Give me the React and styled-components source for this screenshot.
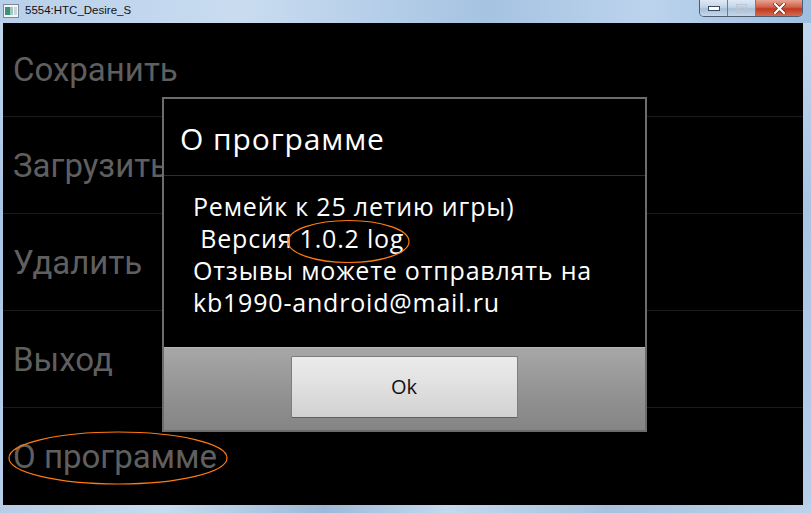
import React from 'react';
import styled, { createGlobalStyle } from 'styled-components';

const GlobalStyle = createGlobalStyle`
  html, body {
    margin: 0;
    padding: 0;
    background: #000;
  }
  #root {
    width: 811px;
    height: 513px;
  }
`;

const Window = styled.div`
  position: relative;
  width: 811px;
  height: 513px;
  display: flex;
  flex-direction: column;
  overflow: hidden;
  background: linear-gradient(180deg, #c3d8ee 0%, #a9c5e3 40%, #b7cfe9 100%);
`;

const TitleBar = styled.div`
  height: 23px;
  display: flex;
  align-items: flex-start;
  padding-left: 3px;
  background: linear-gradient(90deg, #b8d0ea 0%, #c9dcf0 30%, #a6c3e2 60%, #bcd3ec 80%, #9fbfe0 100%);
`;

const AppIcon = styled.svg`
  margin-top: 4px;
  width: 16px;
  height: 14px;
  flex: none;
`;

const Title = styled.div`
  margin-left: 6px;
  margin-top: 4px;
  font-family: "Liberation Sans", "DejaVu Sans", sans-serif;
  font-size: 11.5px;
  color: #111;
`;

const Controls = styled.div`
  margin-left: auto;
  margin-right: 8px;
  display: flex;
  height: 16px;
  border: 1px solid #4d5e74;
  border-top: none;
  border-radius: 0 0 5px 5px;
  overflow: hidden;
`;

const CtrlButton = styled.div`
  width: ${p => p.$w}px;
  height: 100%;
  display: flex;
  align-items: center;
  justify-content: center;
  background: ${p => p.$close
    ? 'linear-gradient(180deg, #e8a493 0%, #d0604a 45%, #c0391f 55%, #d46a4f 100%)'
    : 'linear-gradient(180deg, #dfe9f5 0%, #c3d4e8 45%, #a9bfd9 55%, #c5d7ea 100%)'};
  & + & {
    border-left: 1px solid #6d7e94;
  }
`;

const Body = styled.div`
  flex: 1;
  display: flex;
  min-height: 0;
`;

const SideFrame = styled.div`
  width: ${p => p.$w}px;
  flex: none;
`;

const Screen = styled.div`
  position: relative;
  flex: 1;
  background: #000;
  overflow: hidden;
`;

const BottomFrame = styled.div`
  height: 8px;
  flex: none;
  background: linear-gradient(90deg, #b6cde6 0%, #c8dcef 20%, #9db9d9 40%, #c4d8ee 55%, #a8c2de 75%, #bcd2ea 100%);
`;

const Menu = styled.div`
  display: flex;
  flex-direction: column;
`;

const MenuItem = styled.div`
  height: 96px;
  display: flex;
  align-items: center;
  padding-left: 10px;
  border-bottom: 1px solid #1b1b1b;
  font-family: Roboto, "Noto Sans", sans-serif;
  font-size: 33px;
  color: #5f5f5f;
  &:first-child {
    height: 93px;
  }
  &:last-child {
    border-bottom: none;
  }
`;

const Dialog = styled.div`
  position: absolute;
  left: 159px;
  top: 74px;
  width: 481px;
  height: 331px;
  border: 2px solid #6c6c6c;
  background: #000;
  display: flex;
  flex-direction: column;
  font-family: "Open Sans", "Noto Sans", sans-serif;
`;

const DialogTitle = styled.div`
  height: 77px;
  flex: none;
  box-sizing: border-box;
  padding: 22px 0 0 16px;
  font-size: 30px;
  letter-spacing: 0.9px;
  line-height: 36px;
  color: #fff;
  border-bottom: 1px solid #2e2e2e;
`;

const DialogText = styled.div`
  flex: 1;
  padding: 14px 0 0 29px;
  font-size: 25px;
  letter-spacing: 0.8px;
  line-height: 32px;
  color: #fff;
  white-space: pre;
`;

const ButtonBar = styled.div`
  height: 83px;
  flex: none;
  box-sizing: border-box;
  display: flex;
  align-items: center;
  justify-content: center;
  border-top: 1px solid #b4b4b4;
  background: linear-gradient(180deg, #a7a7a7 0%, #9a9a9a 35%, #8f8f8f 65%, #858585 100%);
`;

const OkButton = styled.button`
  width: 227px;
  height: 62px;
  margin-left: -1px;
  margin-top: -5px;
  border: 1px solid #7e7e7e;
  border-bottom-color: #5f5f5f;
  border-radius: 2px;
  background: linear-gradient(180deg, #ecebec 0%, #e2e1e2 45%, #d2d1d2 100%);
  font-family: "Open Sans", "Noto Sans", sans-serif;
  font-size: 20px;
  color: #111;
  padding: 0;
`;

const Annotations = styled.svg`
  position: absolute;
  left: 0;
  top: 0;
  width: 811px;
  height: 513px;
  pointer-events: none;
`;

const menuItems = ['Сохранить', 'Загрузить', 'Удалить', 'Выход', 'О программе'];

const App = () => {
  return (
    <>
      <GlobalStyle />
      <Window>
        <TitleBar>
          <AppIcon viewBox="0 0 16 14">
            <rect x="0.5" y="0.5" width="15" height="13" fill="#f4f6f8" stroke="#7c8a99" />
            <rect x="2" y="3" width="5" height="8" fill="#3f8f7a" />
            <rect x="7" y="3" width="3" height="8" fill="#9fc9b8" />
            <rect x="11" y="3" width="3" height="8" fill="#c9d5e0" />
          </AppIcon>
          <Title>5554:HTC_Desire_S</Title>
          <Controls>
            <CtrlButton $w={27}>
              <svg width="12" height="6" viewBox="0 0 12 6">
                <rect x="0.5" y="1.5" width="11" height="4" fill="#fff" stroke="#3a4a60" />
              </svg>
            </CtrlButton>
            <CtrlButton $w={27}>
              <svg width="11" height="9" viewBox="0 0 11 9">
                <rect x="0.5" y="0.5" width="10" height="8" fill="none" stroke="#b9c6d6" />
                <rect x="2.5" y="3" width="6" height="3.5" fill="none" stroke="#b9c6d6" />
              </svg>
            </CtrlButton>
            <CtrlButton $w={46} $close>
              <svg width="13" height="11" viewBox="0 0 13 11">
                <path d="M2 1 L11 10 M11 1 L2 10" stroke="#5a2a22" strokeWidth="3.6" strokeLinecap="square" />
                <path d="M2 1 L11 10 M11 1 L2 10" stroke="#fff" strokeWidth="2.2" strokeLinecap="square" />
              </svg>
            </CtrlButton>
          </Controls>
        </TitleBar>
        <Body>
          <SideFrame $w={3} />
          <Screen>
            <Menu>
              {menuItems.map(item => (
                <MenuItem key={item}>{item}</MenuItem>
              ))}
            </Menu>
            <Dialog>
              <DialogTitle>О программе</DialogTitle>
              <DialogText>
                {'Ремейк к 25 летию игры)\n Версия 1.0.2 log\nОтзывы можете отправлять на\nkb1990-android@mail.ru'}
              </DialogText>
              <ButtonBar>
                <OkButton type="button">Ok</OkButton>
              </ButtonBar>
            </Dialog>
          </Screen>
          <SideFrame $w={8} />
        </Body>
        <BottomFrame />
        <Annotations viewBox="0 0 811 513">
          <ellipse cx="348.5" cy="241.5" rx="60.5" ry="21" fill="none" stroke="#ff7a10" strokeWidth="1.2" />
          <ellipse cx="118" cy="458" rx="109" ry="26" fill="none" stroke="#ff7a10" strokeWidth="1.2" />
        </Annotations>
      </Window>
    </>
  );
};

export default App;
